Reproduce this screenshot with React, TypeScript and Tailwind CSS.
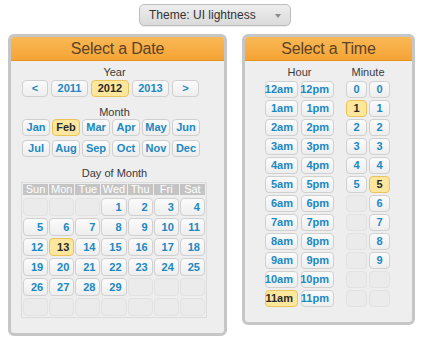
import React from "react";

const FONT = { fontFamily: '"Liberation Sans", Arial, sans-serif' };

const btn =
  "flex items-center rounded-[4px] border text-[11px] font-bold leading-none";
const normal =
  "border-[#d0d0d0] bg-linear-to-b from-[#fbfbfb] to-[#eeeeee] text-[#2088c2]";
const picked = "border-[#ebc35c] bg-[#fde79c] text-[#2a2a2a]";
const empty = "rounded-[4px] border border-[#e2e2e2] bg-[#ebebeb]";

const Btn = ({
  label,
  w,
  h = 17,
  on,
  align = "center",
}: {
  label: string;
  w: string;
  h?: number;
  on?: boolean;
  align?: "center" | "right";
}) => (
  <div
    className={`${btn} ${on ? picked : normal} ${w} ${
      align === "right" ? "justify-end pr-[4px]" : "justify-center"
    }`}
    style={{ height: h }}
  >
    {label}
  </div>
);

const Panel = ({
  title,
  className,
  children,
}: {
  title: string;
  className: string;
  children: React.ReactNode;
}) => (
  <div
    className={`rounded-[6px] border-[3px] border-[#c6c6c6] bg-[#eeeeee] ${className}`}
  >
    <div className="flex h-[24px] items-center justify-center rounded-t-[3px] border-b border-[#e3951f] bg-linear-to-b from-[#f9b855] to-[#f5a434] text-[16px] leading-none tracking-[-0.2px] text-[#5c4226]">
      {title}
    </div>
    {children}
  </div>
);

const Label = ({ children }: { children: React.ReactNode }) => (
  <div className="text-center text-[11px] leading-[13px] text-[#3a3a3a]">
    {children}
  </div>
);

const months = ["Jan", "Feb", "Mar", "Apr", "May", "Jun", "Jul", "Aug", "Sep", "Oct", "Nov", "Dec"];
const dayNames = ["Sun", "Mon", "Tue", "Wed", "Thu", "Fri", "Sat"];

export default function App() {
  // Feb 2012 starts on Wednesday
  const cells: (number | null)[] = [];
  for (let i = 0; i < 42; i++) {
    const d = i - 2;
    cells.push(d >= 1 && d <= 29 ? d : null);
  }

  const hoursAm = ["12am", "1am", "2am", "3am", "4am", "5am", "6am", "7am", "8am", "9am", "10am", "11am"];
  const hoursPm = ["12pm", "1pm", "2pm", "3pm", "4pm", "5pm", "6pm", "7pm", "8pm", "9pm", "10pm", "11pm"];

  return (
    <div className="h-[340px] w-[427px] bg-white" style={FONT}>
      <div className="flex justify-center pt-[4px] pl-[3px]">
        <div className="flex h-[22px] w-[152px] items-center justify-between rounded-[5px] border border-[#bdbdbd] bg-linear-to-b from-[#eeeeee] to-[#dadada] pr-[9px] pl-[9px] text-[12px] text-[#333333] shadow-[0_1px_1px_rgba(0,0,0,0.08)]">
          <span>Theme: UI lightness</span>
          <svg width="6" height="4" viewBox="0 0 6 4" className="mt-[2px]">
            <path d="M0 0 L6 0 L3 4 Z" fill="#8a8a8a" />
          </svg>
        </div>
      </div>

      <div className="mt-[8px] flex items-start pl-[8px]">
        <Panel title="Select a Date" className="w-[219px]">
          <div className="pt-[5px] pb-[15px] pl-[10px]">
            <div className="w-[187px]">
              <Label>Year</Label>
              <div className="mt-px ml-px flex gap-[3px]">
                <Btn label="<" w="w-[26px]" />
                <Btn label="2011" w="w-[37px]" />
                <Btn label="2012" w="w-[38px]" on />
                <Btn label="2013" w="w-[37px]" />
                <Btn label=">" w="w-[27px]" />
              </div>

              <div className="mt-[9px]">
                <Label>Month</Label>
              </div>
              <div className="ml-px grid w-[178px] grid-cols-6 gap-x-[2px] gap-y-[4px]">
                {months.map((m) => (
                  <Btn key={m} label={m} w="w-full" on={m === "Feb"} />
                ))}
              </div>

              <div className="mt-[10px]">
                <Label>Day of Month</Label>
              </div>
              <div className="mt-[2px] w-[186px] border border-[#dcdcdc] p-px">
                <div className="grid grid-cols-7 gap-x-px">
                  {dayNames.map((d) => (
                    <div
                      key={d}
                      className="h-[11px] bg-[#c4c4c4] text-center text-[11px] leading-[11px] text-white"
                    >
                      {d}
                    </div>
                  ))}
                </div>
                <div className="mt-[3px] grid grid-cols-7 gap-x-px gap-y-[2px]">
                  {cells.map((d, i) =>
                    d === null ? (
                      <div key={i} className={`${empty} h-[18px]`} />
                    ) : (
                      <Btn
                        key={i}
                        label={String(d)}
                        w="w-full"
                        h={18}
                        align="right"
                        on={d === 13}
                      />
                    ),
                  )}
                </div>
              </div>
            </div>
          </div>
        </Panel>

        <Panel title="Select a Time" className="ml-[15px] w-[173px]">
          <div className="flex gap-[12px] pt-[5px] pb-[15px] pl-[20px]">
            <div className="w-[69px]">
              <Label>Hour</Label>
              <div className="mt-[2px] grid grid-cols-2 gap-x-[3px] gap-y-[2px]">
                {hoursAm.map((h, i) => (
                  <React.Fragment key={h}>
                    <Btn label={h} w="w-full" align="right" on={h === "11am"} />
                    <Btn label={hoursPm[i]} w="w-full" align="right" />
                  </React.Fragment>
                ))}
              </div>
            </div>
            <div className="w-[44px]">
              <Label>Minute</Label>
              <div className="mt-[2px] grid grid-cols-2 gap-x-[2px] gap-y-[2px]">
                {Array.from({ length: 12 }).map((_, i) => (
                  <React.Fragment key={i}>
                    {i <= 5 ? (
                      <Btn label={String(i)} w="w-full" on={i === 1} />
                    ) : (
                      <div className={`${empty} h-[17px]`} />
                    )}
                    {i <= 9 ? (
                      <Btn label={String(i)} w="w-full" on={i === 5} />
                    ) : (
                      <div className={`${empty} h-[17px]`} />
                    )}
                  </React.Fragment>
                ))}
              </div>
            </div>
          </div>
        </Panel>
      </div>
    </div>
  );
}
